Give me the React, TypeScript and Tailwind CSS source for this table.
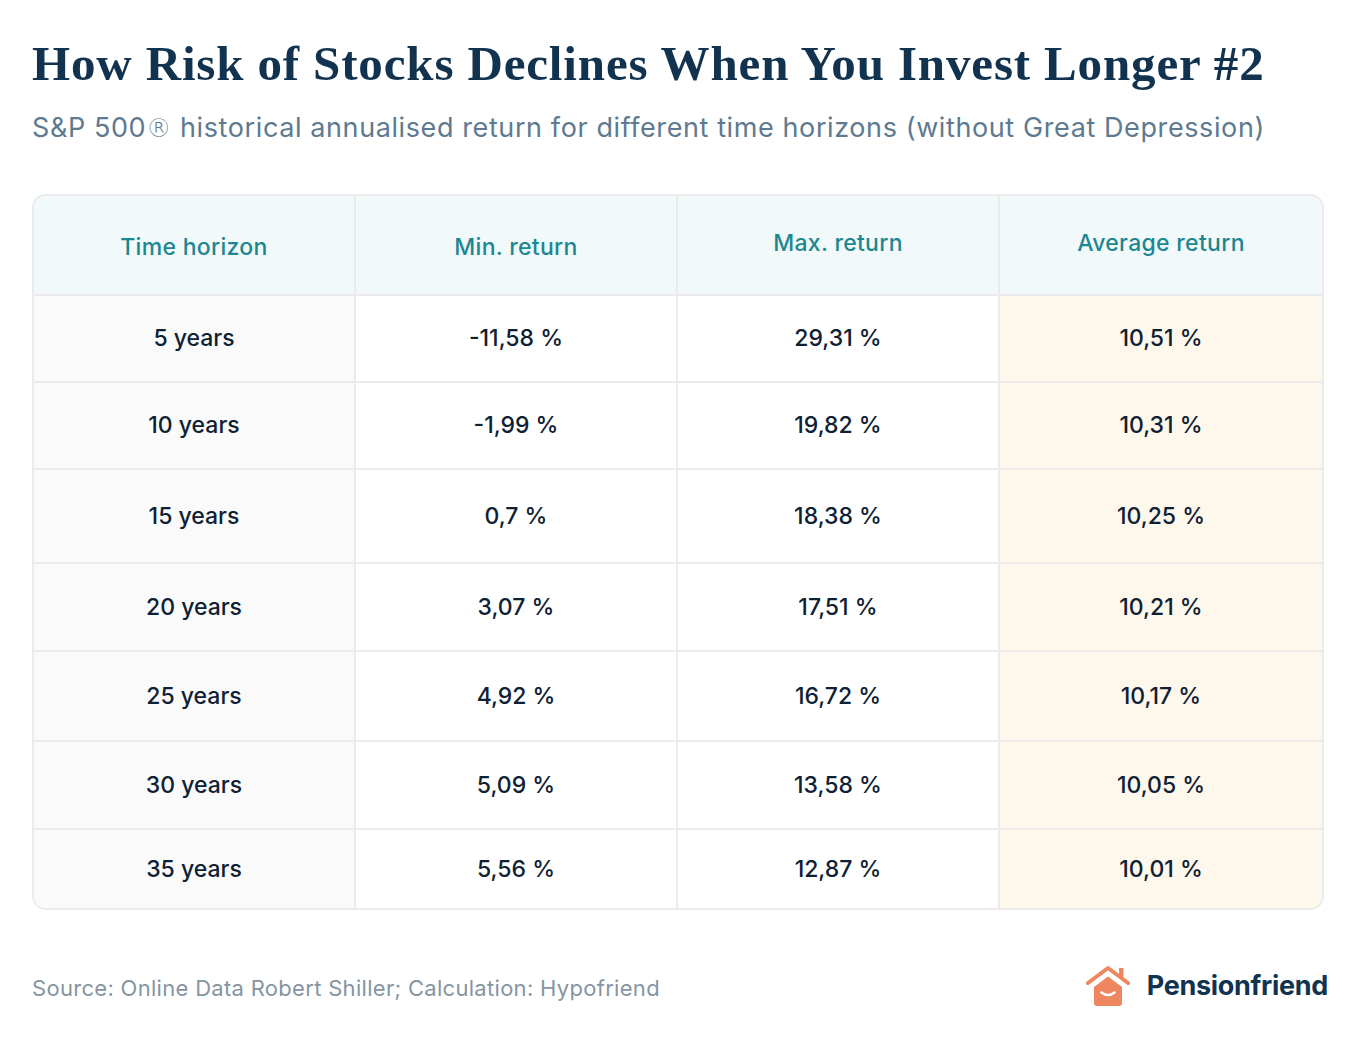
import React from "react";

const rows = [
  { h: "h-[87px]", t: "5 years", min: "-11,58 %", max: "29,31 %", avg: "10,51 %" },
  { h: "h-[87px]", t: "10 years", min: "-1,99 %", max: "19,82 %", avg: "10,31 %" },
  { h: "h-[94px]", t: "15 years", min: "0,7 %", max: "18,38 %", avg: "10,25 %" },
  { h: "h-[88px]", t: "20 years", min: "3,07 %", max: "17,51 %", avg: "10,21 %" },
  { h: "h-[90px]", t: "25 years", min: "4,92 %", max: "16,72 %", avg: "10,17 %" },
  { h: "h-[88px]", t: "30 years", min: "5,09 %", max: "13,58 %", avg: "10,05 %" },
  { h: "h-[80px]", t: "35 years", min: "5,56 %", max: "12,87 %", avg: "10,01 %" },
];

const sans = "font-['Inter',sans-serif]";

function House() {
  return (
    <svg width="46" height="44" viewBox="0 0 46 44" fill="none">
      <path d="M3 19 L23 4 L43 19" stroke="#ee8660" strokeWidth="4" strokeLinecap="round" strokeLinejoin="round" />
      <rect x="34" y="4" width="4.5" height="9" fill="#ee8660" />
      <path d="M9 23 L23 12.5 L37 23 V39 a3 3 0 0 1 -3 3 H12 a3 3 0 0 1 -3 -3 Z" fill="#ee8660" />
      <path d="M16.5 28.5 Q23 33.5 29.5 28.5" stroke="white" strokeWidth="2.6" strokeLinecap="round" fill="none" />
    </svg>
  );
}

export default function App() {
  return (
    <div className="w-[1356px] h-[1042px] bg-white px-[32px] pt-[36px] relative">
      <h1 className="font-['Liberation_Serif',serif] font-bold text-[49px] leading-[56px] text-[#11334f] tracking-[0.85px] whitespace-nowrap">
        How Risk of Stocks Declines When You Invest Longer #2
      </h1>
      <p className={`${sans} mt-[19px] h-[34px] text-[27px] leading-[34px] text-[#5d7a91] tracking-[0.6px] whitespace-nowrap`}>
        S&amp;P 500<span className="font-['DejaVu_Sans',sans-serif] font-light text-[25px] leading-none">®</span> historical annualised return for different time horizons (without Great Depression)
      </p>

      <div className={`${sans} mt-[49px] w-[1292px] border-2 border-[#ebebeb] rounded-[14px] overflow-hidden`}>
        <div className="flex h-[98px] bg-[#f1f9fb] text-[#1c8791] text-[23px] font-medium tracking-[0.3px]">
          <div className="w-[322px] flex items-center justify-center border-r-2 border-[#ebebeb] pt-[4px]">Time horizon</div>
          <div className="w-[322px] flex items-center justify-center border-r-2 border-[#ebebeb] pt-[4px]">Min. return</div>
          <div className="w-[322px] flex items-center justify-center border-r-2 border-[#ebebeb] pb-[4px]">Max. return</div>
          <div className="flex-1 flex items-center justify-center pb-[4px]">Average return</div>
        </div>
        {rows.map((r) => (
          <div key={r.t} className={`flex ${r.h} border-t-2 border-[#ebebeb] text-[23px] font-medium text-[#0e2134]`}>
            <div className="w-[322px] flex items-center justify-center border-r-2 border-[#ebebeb] bg-[#fafafa]">{r.t}</div>
            <div className="w-[322px] flex items-center justify-center border-r-2 border-[#ebebeb] bg-white">{r.min}</div>
            <div className="w-[322px] flex items-center justify-center border-r-2 border-[#ebebeb] bg-white">{r.max}</div>
            <div className="flex-1 flex items-center justify-center bg-[#fef7ec]">{r.avg}</div>
          </div>
        ))}
      </div>

      <div className="mt-[58px] flex items-center justify-between w-[1296px]">
        <p className={`${sans} text-[22px] tracking-[0.3px] text-[#8595a3]`}>
          Source: Online Data Robert Shiller; Calculation: Hypofriend
        </p>
        <div className="flex items-center gap-[16px] -mt-[4px]">
          <House />
          <span className={`${sans} text-[27px] font-bold text-[#11334f] tracking-[-0.3px]`}>Pensionfriend</span>
        </div>
      </div>
    </div>
  );
}
